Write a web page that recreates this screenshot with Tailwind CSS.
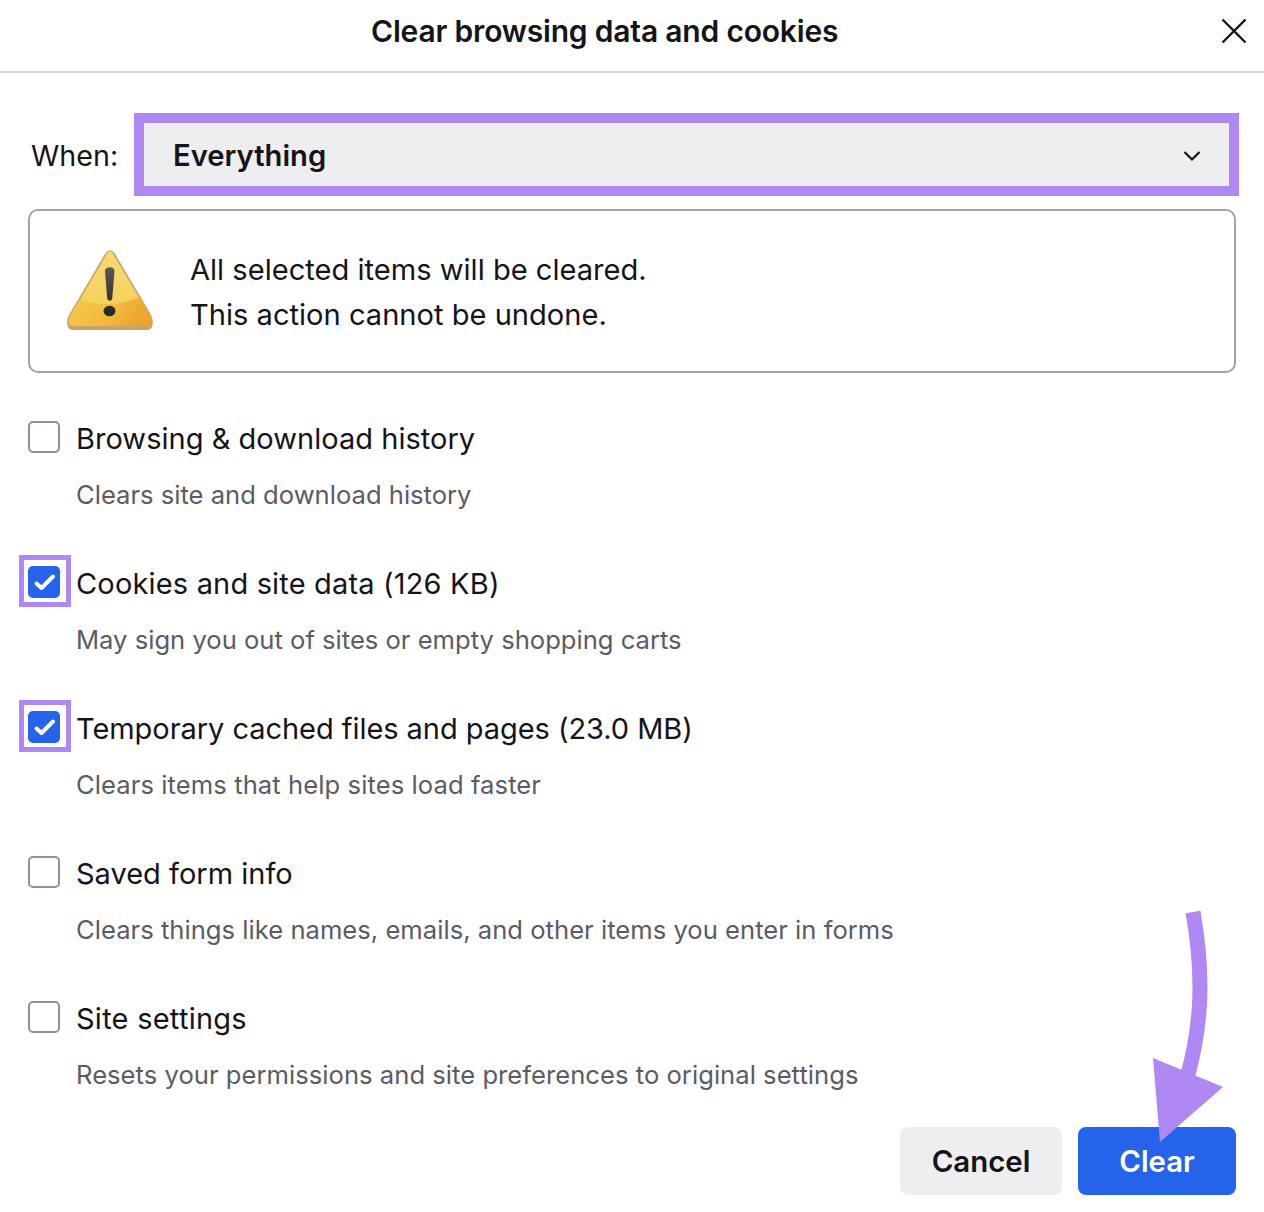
<!DOCTYPE html>
<html><head><meta charset="utf-8"><script src="https://cdn.jsdelivr.net/npm/@tailwindcss/browser@4"></script></head>
<body class="bg-white">
<div class="relative w-[1264px] h-[1212px] overflow-hidden bg-white text-[#15141a] font-['Inter','Liberation_Sans',sans-serif]">
  <header class="relative h-[73px] border-b-2 border-[#d8d8da] flex items-center pl-[371px] pb-[9px]">
    <h1 class="text-[30px] leading-[63px] font-semibold tracking-[-0.19px]">Clear browsing data and cookies</h1>
    <svg class="absolute left-[1220px] top-[17px] w-[28px] h-[28px]" viewBox="0 0 28 28" fill="none" stroke="#15141a" stroke-width="2.4"><path d="M2.5 2.5 25.5 25.5M25.5 2.5 2.5 25.5"/></svg>
  </header>
  <div class="flex items-center mt-[40px] h-[83px] pl-[31px]">
    <span class="w-[103px] pt-[2px] text-[28.7px] leading-[40px]">When:</span>
    <div class="w-[1105px] h-[83px] border-[10px] border-[#b088f3] bg-[#eeeef0] flex items-center justify-between pl-[29px] pr-[28px] pt-[2px]">
      <span class="text-[29.2px] font-semibold">Everything</span>
      <svg class="w-[18px] h-[12px]" viewBox="0 0 18 12" fill="none" stroke="#15141a" stroke-width="2.2"><path d="M1.5 2 9 9.5 16.5 2"/></svg>
    </div>
  </div>
  <div class="ml-[28px] mt-[13px] w-[1208px] h-[164px] border-2 border-[#a3a3a5] rounded-[10px] flex items-center">
    <svg class="ml-[35px] w-[90px] h-[82px] shrink-0 blur-[0.7px]" viewBox="0 0 90 82">
      <defs>
        <linearGradient id="w" x1="0" y1="0" x2="0" y2="1"><stop offset="0" stop-color="#f8da74"/><stop offset="1" stop-color="#f6cd52"/></linearGradient>
        <linearGradient id="g" x1="0" y1="0" x2="1" y2="0.3"><stop offset="0" stop-color="#f5ca4e"/><stop offset="0.6" stop-color="#f2bb40"/><stop offset="1" stop-color="#eca52e"/></linearGradient>
        <linearGradient id="b" x1="0" y1="0" x2="0" y2="1"><stop offset="0" stop-color="#5c5a56"/><stop offset="1" stop-color="#34322f"/></linearGradient>
      </defs>
      <path d="M45 0.500C42 0.500 40.500 3 39 5.500L4 65C1 70.500 1.500 80 8 80H82C88.500 80 89 70.500 86 65L51 5.500C49.500 3 48 0.500 45 0.500Z" fill="#c7a468"/>
      <path d="M45 1.500C43 1.500 42 3.500 41 5.500L5 66.500C2.500 71 4 76 8 76H82C86 76 87.500 71 85 66.500L49 5.500C48 3.500 47 1.500 45 1.500Z" fill="url(#w)"/>
      <path d="M14.500 50C32 56 58 56 75.500 46L85 66.500C87.500 71 86 76 82 76H8C4 76 2.500 71 5 66.500Z" fill="url(#g)"/>
      <path d="M40 21C40 16 49.500 16 49.500 21L47.300 48C47 51.500 42.500 51.500 42.200 48Z" fill="url(#b)"/>
      <ellipse cx="44.500" cy="61" rx="6" ry="5.300" fill="#2c2a28"/>
    </svg>
    <div class="ml-[35px] pt-[2px] text-[29.1px] leading-[45px]">
      <p>All selected items will be cleared.</p>
      <p>This action cannot be undone.</p>
    </div>
  </div>
  <div class="mt-[47px] pl-[28px] flex flex-col gap-[42px]">
    <div class="h-[103px]">
      <div class="flex items-center h-[50px] -mt-[8px]"><span class="w-[32px] h-[32px] rounded-[5px] border-2 border-[#8f8f9d] bg-white"></span><span class="ml-[16px] pt-[4px] text-[29px] leading-[50px] tracking-[0.03px]">Browsing &amp; download history</span></div>
      <p class="ml-[48px] mt-[15px] text-[25.6px] leading-[36px] text-[#5b5b66]">Clears site and download history</p>
    </div>
    <div class="h-[103px]">
      <div class="flex items-center h-[50px] -mt-[8px]">
        <span class="relative w-[32px] h-[32px] rounded-[5px] bg-[#2563eb] flex items-center justify-center">
          <span class="absolute left-[-9px] top-[-11px] w-[52px] h-[52px] border-[5px] border-[#b088f3]"></span>
          <svg class="w-[24px] h-[24px]" viewBox="0 0 24 24" fill="none" stroke="#fff" stroke-width="4" stroke-linecap="round" stroke-linejoin="round"><path d="M4.500 13.500 9.500 18 21 6.500"/></svg>
        </span>
        <span class="ml-[16px] pt-[4px] text-[29px] leading-[50px] tracking-[0.17px]">Cookies and site data (126 KB)</span>
      </div>
      <p class="ml-[48px] mt-[15px] text-[25.6px] leading-[36px] text-[#5b5b66]">May sign you out of sites or empty shopping carts</p>
    </div>
    <div class="h-[103px]">
      <div class="flex items-center h-[50px] -mt-[8px]">
        <span class="relative w-[32px] h-[32px] rounded-[5px] bg-[#2563eb] flex items-center justify-center">
          <span class="absolute left-[-9px] top-[-11px] w-[52px] h-[52px] border-[5px] border-[#b088f3]"></span>
          <svg class="w-[24px] h-[24px]" viewBox="0 0 24 24" fill="none" stroke="#fff" stroke-width="4" stroke-linecap="round" stroke-linejoin="round"><path d="M4.500 13.500 9.500 18 21 6.500"/></svg>
        </span>
        <span class="ml-[16px] pt-[4px] text-[29px] leading-[50px] tracking-[-0.05px]">Temporary cached files and pages (23.0 MB)</span>
      </div>
      <p class="ml-[48px] mt-[15px] text-[25.6px] leading-[36px] tracking-[0.08px] text-[#5b5b66]">Clears items that help sites load faster</p>
    </div>
    <div class="h-[103px]">
      <div class="flex items-center h-[50px] -mt-[8px]"><span class="w-[32px] h-[32px] rounded-[5px] border-2 border-[#8f8f9d] bg-white"></span><span class="ml-[16px] pt-[4px] text-[29px] leading-[50px]">Saved form info</span></div>
      <p class="ml-[48px] mt-[15px] text-[25.6px] leading-[36px] tracking-[0.02px] text-[#5b5b66]">Clears things like names, emails, and other items you enter in forms</p>
    </div>
    <div class="h-[103px]">
      <div class="flex items-center h-[50px] -mt-[8px]"><span class="w-[32px] h-[32px] rounded-[5px] border-2 border-[#8f8f9d] bg-white"></span><span class="ml-[16px] pt-[4px] text-[29px] leading-[50px] tracking-[0.25px]">Site settings</span></div>
      <p class="ml-[48px] mt-[15px] text-[25.6px] leading-[36px] tracking-[0.03px] text-[#5b5b66]">Resets your permissions and site preferences to original settings</p>
    </div>
  </div>
  <div class="absolute left-[900px] top-[1127px] flex gap-[16px]">
    <button class="w-[162px] h-[68px] pt-[2px] rounded-[8px] bg-[#eeeef0] text-[29.4px] font-semibold">Cancel</button>
    <button class="w-[158px] h-[68px] pt-[2px] rounded-[8px] bg-[#2563eb] text-white text-[29.3px] font-semibold">Clear</button>
  </div>
  <svg class="absolute left-[1140px] top-[900px] w-[100px] h-[250px]" viewBox="0 0 100 250" fill="none">
    <path d="M53 12C64 75 62 125 47 178" stroke="#b088f3" stroke-width="15"/>
    <path d="M13 158 83 187 20 242Z" fill="#b088f3"/>
  </svg>
</div>
</body></html>
